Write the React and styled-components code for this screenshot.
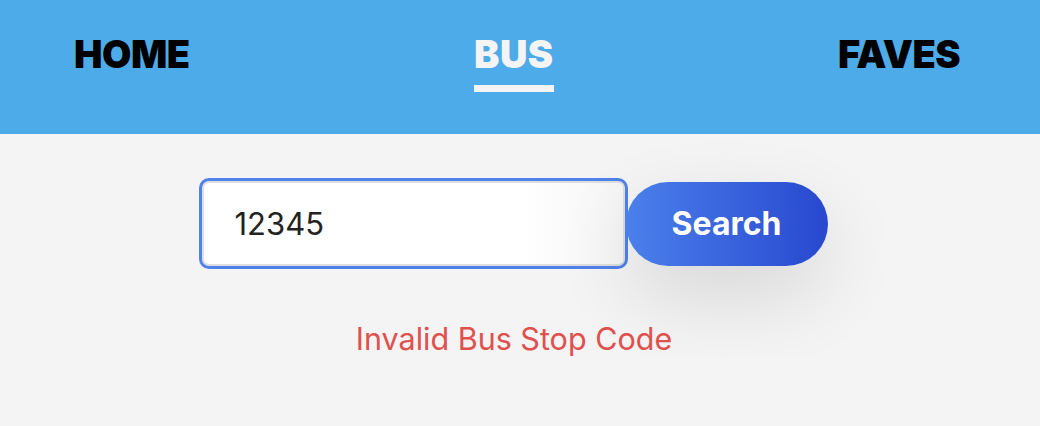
import React, { useState } from 'react';
import styled, { createGlobalStyle } from 'styled-components';

const GlobalStyle = createGlobalStyle`
  html, body {
    margin: 0;
    padding: 0;
    background: #f4f4f4;
  }
  body {
    font-family: Inter, "Noto Sans", sans-serif;
  }
`;

function App() {
  const [code, setCode] = useState('12345');
  return (
    <>
      <GlobalStyle />
      <Header>
        <NavItem href="#">HOME</NavItem>
        <NavItem href="#" $active>BUS</NavItem>
        <NavItem href="#">FAVES</NavItem>
      </Header>
      <Main>
        <SearchRow>
          <CodeInput value={code} onChange={(e) => setCode(e.target.value)} />
          <SearchButton>Search</SearchButton>
        </SearchRow>
        <ErrorText>Invalid Bus Stop Code</ErrorText>
      </Main>
    </>
  );
}

export default App;

// header

const Header = styled.nav`
  height: 134px;
  background: #4eabe9;
  display: flex;
  justify-content: space-between;
  align-items: flex-start;
  padding: 0 80px 0 74px;
  box-sizing: border-box;
`;

const NavItem = styled.a`
  margin-top: 30px;
  font-family: Inter, sans-serif;
  font-weight: 900;
  font-size: 38px;
  letter-spacing: ${(p) => (p.$active ? '0.5px' : '-0.5px')};
  line-height: 48px;
  text-decoration: none;
  color: ${(p) => (p.$active ? '#f4f4f4' : '#000')};
  padding-bottom: 7px;
  border-bottom: 7px solid ${(p) => (p.$active ? '#f4f4f4' : 'transparent')};
`;

// search

const Main = styled.main`
  display: flex;
  flex-direction: column;
  align-items: center;
  padding-top: 44px;
  padding-right: 12px;
`;

const SearchRow = styled.div`
  display: flex;
  align-items: center;
  margin-right: 2px;
`;

const CodeInput = styled.input`
  width: 429px;
  height: 91px;
  margin: 0;
  box-sizing: border-box;
  border: 3px solid #4f82ea;
  border-radius: 10px;
  padding: 0 33px;
  font-family: Inter, sans-serif;
  font-size: 31px;
  color: #222;
  background: linear-gradient(90deg, #fff 75%, #f5f5f5 100%);
  box-shadow: inset 0 0 0 2px #dedede;
  outline: none;
`;

const SearchButton = styled.button`
  width: 202px;
  height: 84px;
  margin: 0 0 0 -2px;
  border: none;
  border-radius: 42px;
  background: linear-gradient(90deg, #4b80eb 0%, #2848cf 100%);
  color: #fff;
  font-family: Inter, sans-serif;
  font-weight: 700;
  font-size: 32px;
  cursor: pointer;
  box-shadow: 0 30px 80px rgba(0, 0, 0, 0.12);
`;

const ErrorText = styled.p`
  margin: 51px 0 0;
  font-family: Inter, sans-serif;
  font-size: 30.5px;
  color: #e0504d;
`;
